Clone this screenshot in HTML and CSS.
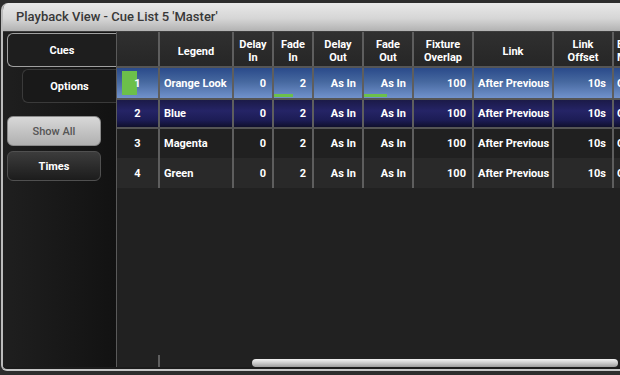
FILE: index.html
```html
<!DOCTYPE html>
<html lang="en">
<head>
  <meta charset="UTF-8">
  <title>Playback View - Cue List 5 'Master'</title>
  <link rel="stylesheet" href="styles.css">
</head>
<body>
  <div class="window">
    <div class="titlebar">Playback View - Cue List 5 'Master'</div>
    <div class="content">
      <div class="sidebar">
        <div class="tab tab-active">Cues</div>
        <div class="tab tab-option">Options</div>
        <div class="btn btn-light">Show All</div>
        <div class="btn btn-dark">Times</div>
      </div>

      <div class="main">
        <div class="row head">
          <div class="cell ctr"></div>
          <div class="cell ctr">Legend</div>
          <div class="cell ctr">Delay<br>In</div>
          <div class="cell ctr">Fade<br>In</div>
          <div class="cell ctr">Delay<br>Out</div>
          <div class="cell ctr">Fade<br>Out</div>
          <div class="cell ctr">Fixture<br>Overlap</div>
          <div class="cell ctr">Link</div>
          <div class="cell ctr">Link<br>Offset</div>
          <div class="cell txt last">Block<br>Mode</div>
        </div>

        <div class="row cur">
          <div class="cell ctr"><span class="live"></span><span class="val">1</span></div>
          <div class="cell txt">Orange Look</div>
          <div class="cell num">0</div>
          <div class="cell num"><span class="bar bar-in"></span>2</div>
          <div class="cell num">As In</div>
          <div class="cell num"><span class="bar bar-out"></span>As In</div>
          <div class="cell num">100</div>
          <div class="cell txt">After Previous</div>
          <div class="cell num">10s</div>
          <div class="cell txt last">Off</div>
        </div>

        <div class="row next">
          <div class="cell ctr">2</div>
          <div class="cell txt">Blue</div>
          <div class="cell num">0</div>
          <div class="cell num">2</div>
          <div class="cell num">As In</div>
          <div class="cell num">As In</div>
          <div class="cell num">100</div>
          <div class="cell txt">After Previous</div>
          <div class="cell num">10s</div>
          <div class="cell txt last">Off</div>
        </div>

        <div class="row odd">
          <div class="cell ctr">3</div>
          <div class="cell txt">Magenta</div>
          <div class="cell num">0</div>
          <div class="cell num">2</div>
          <div class="cell num">As In</div>
          <div class="cell num">As In</div>
          <div class="cell num">100</div>
          <div class="cell txt">After Previous</div>
          <div class="cell num">10s</div>
          <div class="cell txt last">Off</div>
        </div>

        <div class="row even">
          <div class="cell ctr">4</div>
          <div class="cell txt">Green</div>
          <div class="cell num">0</div>
          <div class="cell num">2</div>
          <div class="cell num">As In</div>
          <div class="cell num">As In</div>
          <div class="cell num">100</div>
          <div class="cell txt">After Previous</div>
          <div class="cell num">10s</div>
          <div class="cell txt last">Off</div>
        </div>

        <div class="spacer"></div>

        <div class="footer">
          <div class="foot-first"></div>
          <div class="thumb"></div>
        </div>
      </div>
    </div>
  </div>
</body>
</html>
```

FILE: styles.css
```css
body {
  margin: 0;
  width: 620px;
  height: 375px;
  overflow: hidden;
  background-color: #2d2d2d;
  font-family: Roboto, "Liberation Sans", sans-serif;
}

.window {
  margin: 3px 0 0 1px;
  width: 680px;
  height: 366px;
  border-left: 2px solid #bcbcbc;
  border-bottom: 2px solid #c6c6c6;
  border-radius: 7px 7px 0 6px;
  overflow: hidden;
  background: #1b1b1b;
  display: flex;
  flex-direction: column;
}

.titlebar {
  height: 28px;
  line-height: 28px;
  padding-left: 13px;
  border-bottom: 1px solid #3c3c3c;
  background: linear-gradient(#e8e8e8, #d6d6d6 55%, #b2b2b2);
  color: #383838;
  font-size: 13px;
  font-weight: 500;
}

.content {
  flex: 1;
  display: flex;
  padding-bottom: 2px;
  min-height: 0;
}

/* Left panel */
.sidebar {
  width: 114px;
  box-sizing: border-box;
  padding: 1px 0 0 4px;
  border-right: 1px solid #5a5a5a;
  background: linear-gradient(90deg, #1f1f1f, #121212);
}

.tab,
.btn {
  display: flex;
  align-items: center;
  justify-content: center;
  box-sizing: border-box;
  color: #fff;
  font-size: 11px;
  font-weight: 700;
}

.tab {
  height: 34px;
  border: 1px solid #a0a0a0;
  border-right: none;
  border-radius: 6px 0 0 6px;
}

.tab-active {
  background: #1e1e1e;
}

.tab-option {
  margin: 2px 0 0 15px;
  border-color: #3a3a3a;
  background: #191919;
}

.btn {
  width: 94px;
  height: 30px;
  border-radius: 6px;
}

.btn-light {
  margin-top: 13px;
  border: 1px solid #8a8a8a;
  background: linear-gradient(#d8d8d8, #b0b0b0);
  color: #555;
  font-weight: 500;
}

.btn-dark {
  margin-top: 5px;
  border: 1px solid #505050;
  background: linear-gradient(#3c3c3c, #1c1c1c);
}

/* Cue table */
.main {
  flex: 1;
  display: flex;
  flex-direction: column;
  background: #212121;
}

.row {
  display: grid;
  grid-template-columns: 43px 74px 40px 40px 50px 50px 60px 80px 60px 60px;
  box-sizing: border-box;
}

.cell {
  position: relative;
  display: flex;
  align-items: center;
  box-sizing: border-box;
  border-right: 2px solid #5e5e5e;
  color: #fff;
  font-size: 11px;
  font-weight: 700;
  white-space: nowrap;
  overflow: hidden;
}

.ctr {
  justify-content: center;
  text-align: center;
}

.txt {
  justify-content: flex-start;
  padding-left: 4px;
}

.num {
  justify-content: flex-end;
  padding-right: 6px;
}

.last {
  padding-left: 3px;
}

.head {
  height: 36px;
  border-bottom: 2px solid #555;
  background: linear-gradient(#303030, #262626);
}

.head .cell {
  padding-top: 4px;
  line-height: 13px;
}

.cur {
  height: 32px;
  border-bottom: 2px solid #555;
  background: linear-gradient(#2a4a8a, #46689f 45%, #7192cc);
}

.cur .cell {
  padding-top: 1px;
}

.next {
  height: 29px;
  border-bottom: 2px solid #555;
  background: linear-gradient(#1b1a48, #252466 40%, #1c1c55 75%, #0f0f2c);
}

.odd {
  height: 29px;
  background: #202020;
}

.even {
  height: 30px;
  background: #292929;
}

.live {
  position: absolute;
  left: 5px;
  top: 3px;
  width: 15px;
  height: 24px;
  background: #6cc04a;
}

.val {
  position: relative;
}

.bar {
  position: absolute;
  left: 0;
  bottom: 1px;
  height: 3px;
  background: #6cc04a;
}

.bar-in {
  width: 19px;
}

.bar-out {
  width: 23px;
}

.spacer {
  flex: 1;
}

.footer {
  display: flex;
  height: 12px;
}

.foot-first {
  width: 43px;
  box-sizing: border-box;
  border-right: 2px solid #5e5e5e;
}

.thumb {
  width: 366px;
  height: 8px;
  margin: 4px 0 0 92px;
  border-radius: 4px;
  background: linear-gradient(#f2f2f2, #cfcfcf 45%, #9c9c9c);
}
```
